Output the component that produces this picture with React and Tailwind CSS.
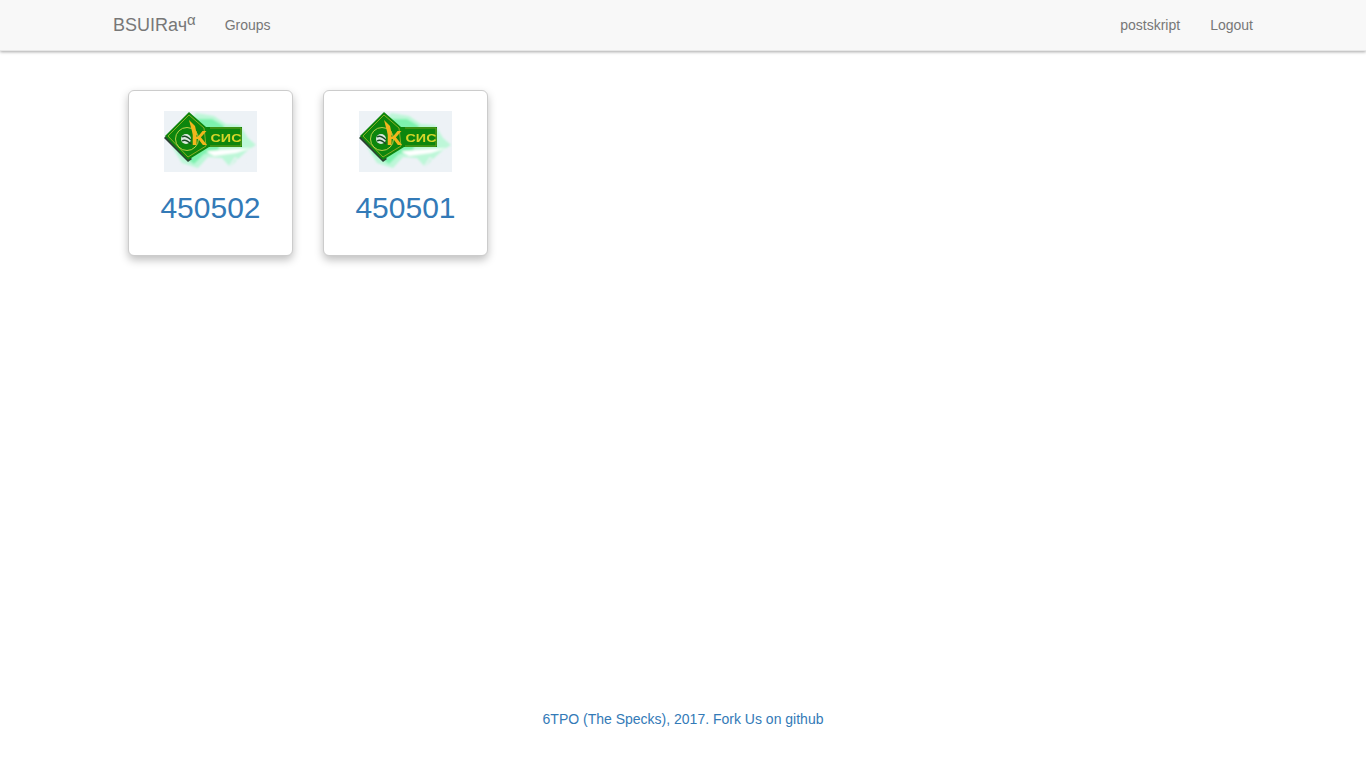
import React from 'react';

const GROUPS = ['450502', '450501'];

function KsisLogo() {
  return (
    <svg viewBox="0 0 93 61" width="93" height="61" className="block">
      <defs>
        <filter id="glow" x="-10%" y="-10%" width="120%" height="120%">
          <feGaussianBlur stdDeviation="1.2" />
        </filter>
        <filter id="soft" x="-5%" y="-5%" width="110%" height="110%">
          <feGaussianBlur stdDeviation="0.3" />
        </filter>
      </defs>
      <rect width="93" height="61" fill="#edf2f6" />
      {/* pale green glow behind the emblem */}
      <g filter="url(#glow)">
        <path d="M32 2 L50 5 L62 13 L76 14 L84 27 L92 34 L84 39 L74 48 L66 56 L58 47 L44 46 L34 57 L18 52 L8 36 Z" fill="#bdf7d8" />
        <path d="M30 8 L48 8 L60 15 L54 40 L40 43 L30 53 L14 42 Z" fill="#7df2ae" />
        <path d="M42 40 L88 37 L72 42 L50 45 Z" fill="#ffffff" />
        <path d="M64 58 L71 47 L78 52 L86 43" stroke="#edf2f6" strokeWidth="1.4" fill="none" />
      </g>
      <g filter="url(#soft)">
        {/* diamond with its dark lower edge */}
        <path d="M0 27 L24 51 L28 48 L3 24 Z" fill="#2c4232" />
        <path d="M25 1 L42 16 L78 16 L78 36 L45 36 L24 49 L1 25 Z" fill="#0f8610" />
        <path d="M25 4 L40 17 L42 35 L24 46 L4 25 Z" fill="none" stroke="#bfc02a" strokeWidth="0.7" />
        <path d="M46 17 H77 V35 H46" fill="none" stroke="#a8b020" strokeWidth="0.6" />
        <circle cx="23" cy="28" r="11.5" fill="none" stroke="#cbd94c" strokeWidth="0.9" />
        <circle cx="22" cy="28" r="5" fill="#dcebe0" />
        <path d="M18 26 C21 24 24 26 27 29 M18 30 C21 28 24 30 27 33" stroke="#1c4a26" strokeWidth="1.3" fill="none" />
        {/* wing and K of the mark */}
        <path d="M25 9 L31 15 L33 24 L29 24 Z" fill="#f2b61e" />
        <text x="27" y="34" fontFamily="'Liberation Sans', sans-serif" fontSize="20" fontWeight="700" textLength="16" lengthAdjust="spacingAndGlyphs" fill="#f2b61e">К</text>
        <text x="46.5" y="31" fontFamily="'Liberation Sans', sans-serif" fontSize="10.5" fontWeight="700" textLength="31" lengthAdjust="spacingAndGlyphs" fill="#d6d62a">СИС</text>
      </g>
    </svg>
  );
}

function GroupCard({ name }) {
  return (
    <div className="w-[165px] h-[166px] rounded-[6px] border border-[#ccc] bg-white shadow-[0_4px_8px_rgba(0,0,0,0.25)] flex flex-col items-center pt-[20px]">
      <KsisLogo />
      <a href="#" className="mt-[16px] text-[30px] leading-[40px] text-[#337ab7]">{name}</a>
    </div>
  );
}

function App() {
  return (
    <div className="min-h-[768px] bg-white flex flex-col font-['Liberation_Sans',Arial,sans-serif] text-[14px] text-[#333]">
      <nav className="h-[51px] bg-[#f8f8f8] border-b border-[#e7e7e7] shadow-[0_1px_3px_rgba(0,0,0,0.35)]">
        <div className="w-[1170px] mx-auto px-[15px] h-[50px] flex items-center text-[#777]">
          <a href="#" className="text-[18px] leading-[20px] whitespace-nowrap">
            BSUIRач<sup className="text-[15px] relative -top-[6px] align-baseline leading-none">α</sup>
          </a>
          <a href="#" className="ml-[29px]">Groups</a>
          <div className="ml-auto flex gap-[30px]">
            <a href="#">postskript</a>
            <a href="#">Logout</a>
          </div>
        </div>
      </nav>

      <main className="w-[1170px] mx-auto flex-1 pt-[39px] pl-[30px] flex gap-[30px] items-start">
        {GROUPS.map((g) => (
          <GroupCard key={g} name={g} />
        ))}
      </main>

      <footer className="h-[59px] text-center">
        <a href="#" className="text-[#337ab7] leading-[20px]">6TPO (The Specks), 2017. Fork Us on github</a>
      </footer>
    </div>
  );
}

export default App;
